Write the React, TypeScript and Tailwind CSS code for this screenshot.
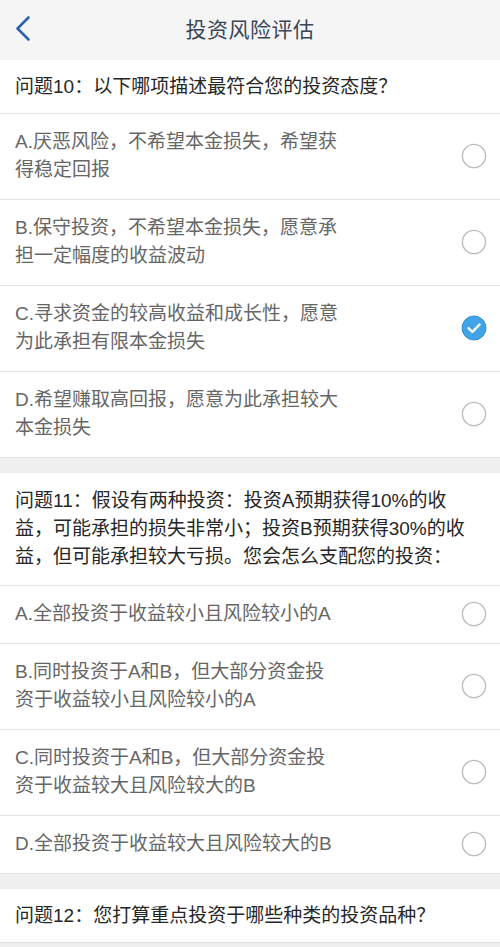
import { Fragment } from "react";

interface Option {
  lines: string[];
  checked?: boolean;
}

interface Question {
  title: string[];
  options: Option[];
}

const questions: Question[] = [
  {
    title: ["问题10：以下哪项描述最符合您的投资态度？"],
    options: [
      { lines: ["A.厌恶风险，不希望本金损失，希望获", "得稳定回报"] },
      { lines: ["B.保守投资，不希望本金损失，愿意承", "担一定幅度的收益波动"] },
      { lines: ["C.寻求资金的较高收益和成长性，愿意", "为此承担有限本金损失"], checked: true },
      { lines: ["D.希望赚取高回报，愿意为此承担较大", "本金损失"] },
    ],
  },
  {
    title: [
      "问题11：假设有两种投资：投资A预期获得10%的收",
      "益，可能承担的损失非常小；投资B预期获得30%的收",
      "益，但可能承担较大亏损。您会怎么支配您的投资：",
    ],
    options: [
      { lines: ["A.全部投资于收益较小且风险较小的A"] },
      { lines: ["B.同时投资于A和B，但大部分资金投", "资于收益较小且风险较小的A"] },
      { lines: ["C.同时投资于A和B，但大部分资金投", "资于收益较大且风险较大的B"] },
      { lines: ["D.全部投资于收益较大且风险较大的B"] },
    ],
  },
  {
    title: ["问题12：您打算重点投资于哪些种类的投资品种？"],
    options: [],
  },
];

const Radio = ({ checked }: { checked?: boolean }) =>
  checked ? (
    <svg width="26" height="26" viewBox="0 0 26 26">
      <circle cx="13" cy="13" r="12" fill="#40a4e6" stroke="#3591cf" strokeWidth="1" />
      <path d="M7.5 13.2 L11.4 16.8 L18.5 9.6" fill="none" stroke="#fff" strokeWidth="2.4" strokeLinecap="round" strokeLinejoin="round" />
    </svg>
  ) : (
    <svg width="26" height="26" viewBox="0 0 26 26">
      <circle cx="13" cy="13" r="11.6" fill="#fff" stroke="#bdbdbd" strokeWidth="1.4" />
    </svg>
  );

export default function App() {
  return (
    <div
      className="w-[500px] h-[947px] overflow-hidden bg-[#efefef]"
      style={{ fontFamily: '"Liberation Sans", "Noto Sans CJK SC", sans-serif' }}
    >
      <header className="h-[60px] bg-[#f5f5f6] flex items-center relative">
        <svg className="absolute left-[12px] top-[13px]" width="22" height="32" viewBox="0 0 22 32">
          <path d="M16.5 4.5 L5.5 15.5 L16.5 26.5" fill="none" stroke="#2c62ad" strokeWidth="2.6" strokeLinecap="round" strokeLinejoin="round" />
        </svg>
        <h1 className="flex-1 text-center text-[21px] text-[#3a4656] tracking-[0.5px]">投资风险评估</h1>
      </header>

      {questions.map((q, qi) => (
        <Fragment key={qi}>
          <section className={qi > 0 ? "mt-[15px] bg-white" : "bg-white"}>
            <div
              className={`px-[15px] border-b border-[#e3e3e3] text-[19px] leading-[28px] text-[#262626] ${
                q.title.length > 1 ? "py-[14px]" : "pt-[13px] pb-[12px]"
              }`}
            >
              {q.title.map((l) => (
                <div key={l} className="whitespace-nowrap">{l}</div>
              ))}
            </div>
            {q.options.map((o, oi) => (
              <div
                key={oi}
                className="flex items-center justify-between pl-[15px] pr-[13px] pt-[14px] pb-[15px] border-b border-[#e3e3e3]"
              >
                <div className="text-[19px] leading-[28px] text-[#666]">
                  {o.lines.map((l) => (
                    <div key={l} className="whitespace-nowrap">{l}</div>
                  ))}
                </div>
                <Radio checked={o.checked} />
              </div>
            ))}
          </section>
        </Fragment>
      ))}
    </div>
  );
}
